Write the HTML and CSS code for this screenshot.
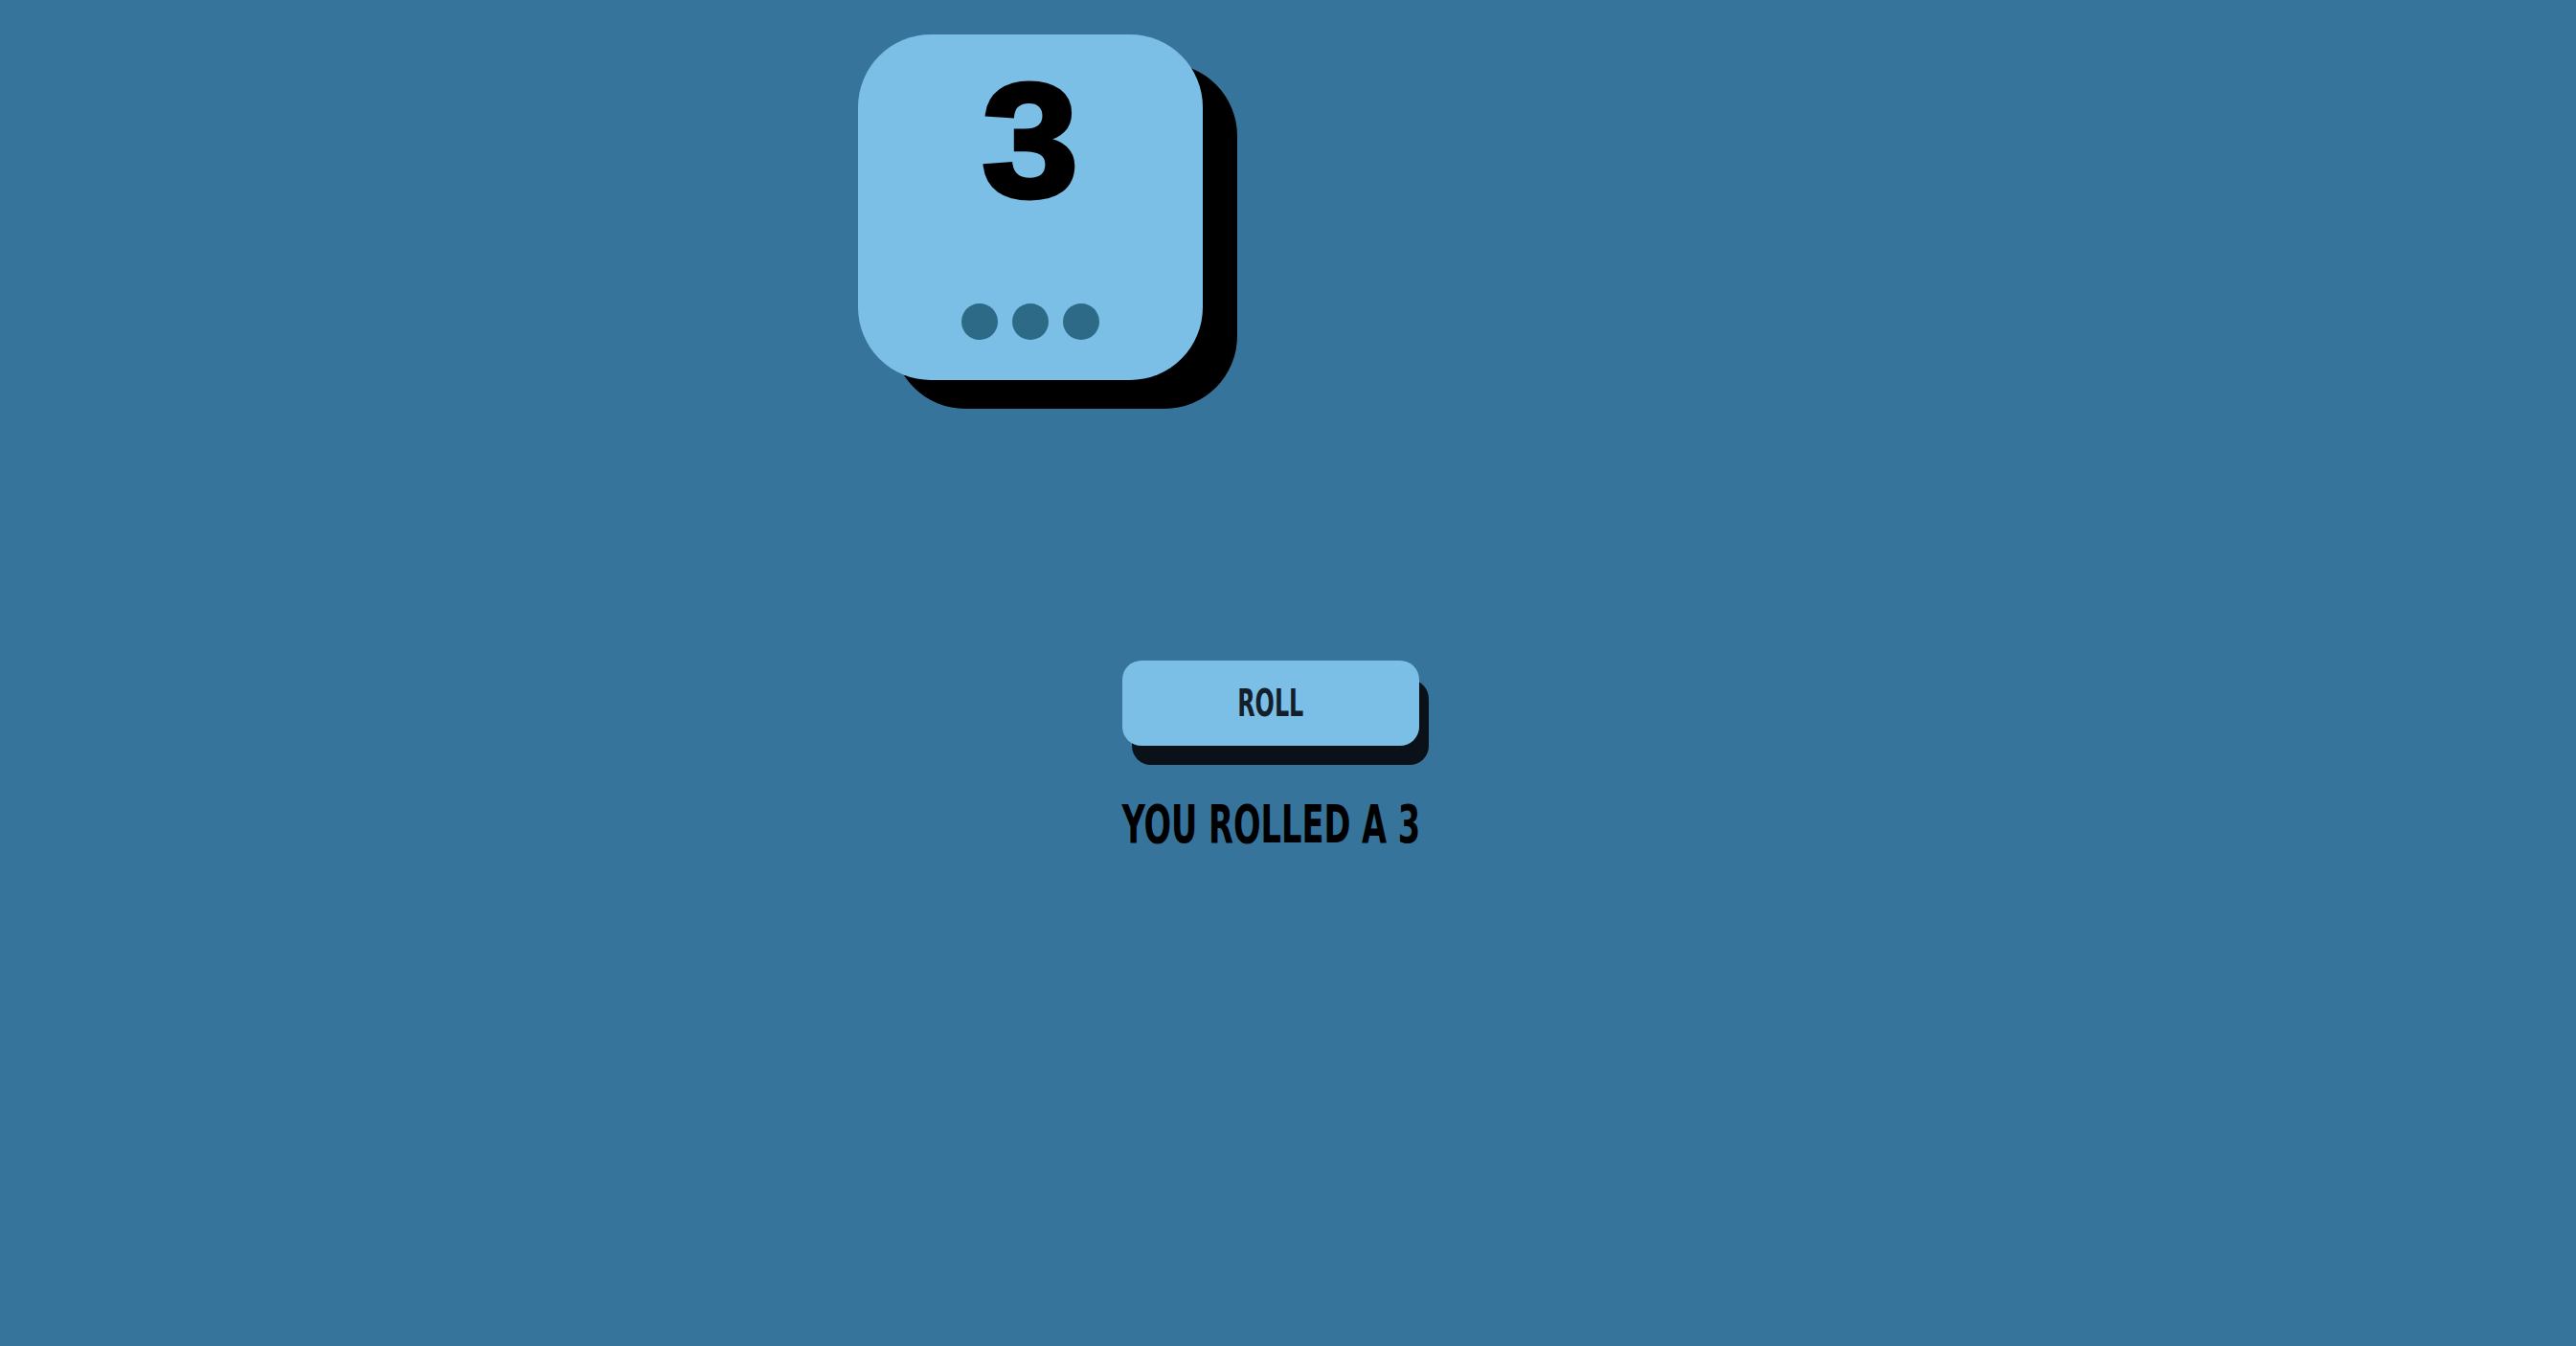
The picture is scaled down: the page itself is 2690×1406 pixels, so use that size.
FILE: index.html
```html
<!DOCTYPE html>
<html>
<head>
<meta charset="utf-8">
<link rel="stylesheet" href="styles.css">
</head>
<body>
<main class="page">
  <div class="dice">
    <span class="dice-value">3</span>
    <div class="dots">
      <span class="dot"></span>
      <span class="dot"></span>
      <span class="dot"></span>
    </div>
  </div>
  <div class="controls">
    <button class="roll-btn"><span class="narrow">ROLL</span></button>
    <h1 class="result"><span class="narrow">YOU ROLLED A 3</span></h1>
  </div>
</main>
</body>
</html>
```
FILE: styles.css
```css
html, body {
  margin: 0;
  padding: 0;
  background: #37749b;
  height: 100%;
}
.page {
  display: flex;
  flex-direction: column;
  min-height: 1406px;
  box-sizing: border-box;
  padding-top: 36px;
}
.dice {
  margin-left: 896px;
  width: 360px;
  height: 361px;
  background: #7bbfe6;
  border-radius: 76px;
  box-shadow: 36px 30px 0 #000;
  display: flex;
  flex-direction: column;
  align-items: center;
  justify-content: space-between;
  box-sizing: border-box;
  padding: 27px 0 42px;
}
.dice-value {
  font-family: "Liberation Sans", Arial, sans-serif;
  font-weight: 700;
  font-size: 168px;
  line-height: 1;
  color: #000;
  display: inline-block;
  -webkit-text-stroke: 5px #000;
  transform: scaleX(1.08);
}
.dots {
  display: flex;
  gap: 15px;
}
.dot {
  width: 38px;
  height: 38px;
  border-radius: 50%;
  background: #2c6a87;
}
.controls {
  display: flex;
  flex-direction: column;
  align-items: center;
  padding-right: 36px;
  margin-top: 293px;
}
.roll-btn {
  width: 310px;
  height: 89px;
  border: none;
  border-radius: 20px;
  background: #7bbfe6;
  box-shadow: 10px 20px 0 #0a1119;
  color: #13202c;
  font-family: "DejaVu Sans Condensed", "DejaVu Sans", sans-serif;
  font-weight: 700;
  font-size: 39px;
  padding: 0;
  cursor: pointer;
}
.narrow {
  display: inline-block;
  transform: scaleX(0.68);
}
.result {
  margin: 55px 0 0;
  font-family: "DejaVu Sans Condensed", "DejaVu Sans", sans-serif;
  font-weight: 700;
  font-size: 55px;
  line-height: 1;
  color: #000;
}
.result .narrow {
  transform: scaleX(0.68);
}
```
